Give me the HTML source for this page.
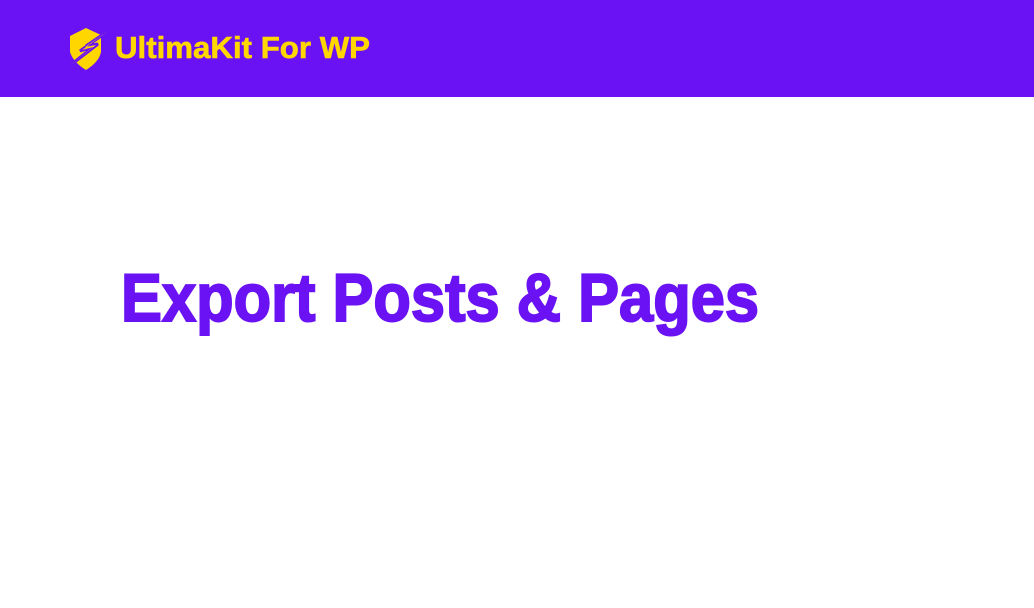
<!DOCTYPE html>
<html><head><style>
html,body{margin:0;padding:0;width:1034px;height:608px;background:#fff;overflow:hidden}
svg{display:block}
</style></head><body>
<svg width="1034" height="608" xmlns="http://www.w3.org/2000/svg">
<rect x="0" y="0" width="1034" height="97" fill="#6a12f3"/>
<path d="M70 36 L86 28 L101 35 L101 52 Q99 62 86 70 Q73 62 70 52 Z" fill="#ffd600"/>
<path d="M108 31 L80 51 L93 47 L68 67 L98 44 L86 46 Z" fill="#6a12f3" stroke="#6a12f3" stroke-width="3"/>
<path d="M108 31 L82 50 L93 47 L68 67 L96 45 L85 47 Z" fill="#ffd600"/>
<text x="115" y="58" font-family="Liberation Sans, sans-serif" font-weight="bold" font-size="31" fill="#ffd600" stroke="#ffd600" stroke-width="0.6" textLength="255" lengthAdjust="spacingAndGlyphs">UltimaKit For WP</text>
<text x="121" y="321" font-family="Liberation Sans, sans-serif" font-weight="bold" font-size="68" fill="#6a12f3" stroke="#6a12f3" stroke-width="2" textLength="638" lengthAdjust="spacingAndGlyphs">Export Posts &amp; Pages</text>
</svg>
</body></html>
